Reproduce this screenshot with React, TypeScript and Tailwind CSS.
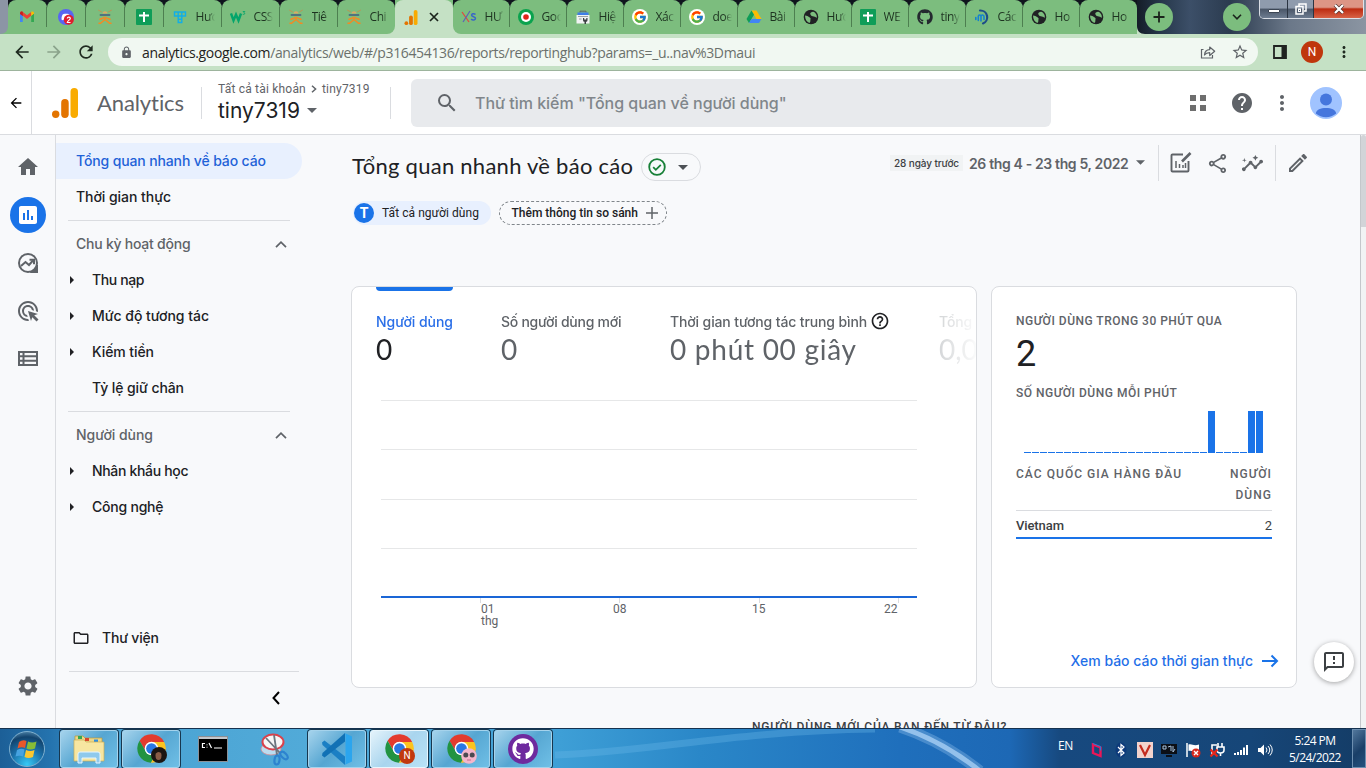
import React from "react";
import {
  MdAdsClick,
  MdArrowBack,
  MdArrowForward,
  MdHelp,
  MdHelpOutline,
  MdHome,
  MdInsertChart,
  MdInsights,
  MdLock,
  MdMoreVert,
  MdOutlineEdit,
  MdOutlineFeedback,
  MdOutlineFolder,
  MdOutlineShare,
  MdRefresh,
  MdSearch,
  MdSettings,
  MdStarOutline,
} from "react-icons/md";
import { FcGoogle } from "react-icons/fc";
import { FaGithub } from "react-icons/fa";

/* ---------- small drawings ---------- */

const GmailIcon = () => (
  <svg viewBox="0 0 16 16" className="size-4">
    <path d="M1 4v9h2.8V7z" fill="#4285f4" />
    <path d="M15 4v9h-2.8V7z" fill="#34a853" />
    <path d="M1 4.2C1 2.8 2.6 2 3.8 3L8 6.200l4.200-3.200v3.800L8 10 3.800 6.800 1 4.700z" fill="#ea4335" />
    <path d="M12.200 3C13.400 2 15 2.800 15 4.200v.6l-2.800 2z" fill="#fbbc04" />
    <path d="M1 4.200v.7l2.800 2V3C2.600 2 1 2.800 1 4.200z" fill="#c5221f" />
  </svg>
);
const DiscordIcon = () => (
  <svg viewBox="0 0 16 16" className="size-4">
    <circle cx="8" cy="8" r="8" fill="#5865f2" />
    <path d="M3.500 10.500c0-3 .8-5 2-5.400 1.600-.5 3.500-.5 5 0 1.300.5 2 2.500 2 5.400-1 1-2 .8-2.400 0H6c-.6.900-1.500 1-2.500 0z" fill="#fff" />
    <circle cx="10.800" cy="10.800" r="5" fill="#e01e2e" />
    <path d="M9.300 9.500c.2-2 3-1.800 3 0 0 1.200-2.800 2.200-3 4h3.200" stroke="#fff" strokeWidth="1.200" fill="none" />
  </svg>
);
const RobotIcon = () => (
  <svg viewBox="0 0 16 16" className="size-4" fill="none" strokeLinecap="round">
    <path d="M1.500 1.200l3 1.600M14.500 1.200l-3 1.600" stroke="#c98a4a" strokeWidth=".8" />
    <path d="M5.500 4.500c0-3 5-3 5 0z" fill="#d9a865" />
    <path d="M3.500 6h9" stroke="#4f7480" strokeWidth="1.800" />
    <path d="M6.500 8.200h3L8 10.500z" fill="#f28a24" stroke="#f28a24" strokeWidth=".8" />
    <path d="M3 10.200l3-1M13 10.200l-3-1M8 10.500l-4.500 3.800H2M8 10.500l4.500 3.800H14" stroke="#f28a24" strokeWidth="1.500" />
  </svg>
);
const SheetsIcon = () => (
  <svg viewBox="0 0 16 16" className="size-4">
    <rect width="16" height="16" rx="1" fill="#0f9d58" />
    <path d="M7 3h2v2.500h4v2H9V13H7V7.500H3v-2h4z" fill="#fff" />
  </svg>
);
const TIcon = () => (
  <svg viewBox="0 0 16 16" className="size-4" fill="none" stroke="#12aee6" strokeWidth="1.400">
    <path d="M2.500 3h11v4h-11zM6.200 3v4M9.800 3v4M6.200 7v6.500h3.600V7M6.200 10.200h3.600" />
  </svg>
);
const W3Icon = () => (
  <svg viewBox="0 0 16 16" className="size-4" fill="none" stroke="#04a56b">
    <path d="M1 4.500l2.500 7 2.500-6 2.500 6 2.500-7" strokeWidth="2.400" />
    <path d="M12.800 2.500h2l-1 1.300c1.500.2 1.300 2-1 1.500" strokeWidth=".9" />
  </svg>
);
const GaIcon = ({ cls }: { cls: string }) => (
  <svg viewBox="0 0 26 30" className={cls}>
    <rect x="18.500" y="0" width="7.500" height="30" rx="3.700" fill="#f9ab00" />
    <rect x="9.200" y="11" width="7.500" height="19" rx="3.700" fill="#e37400" />
    <circle cx="3.700" cy="26.300" r="3.700" fill="#e37400" />
  </svg>
);
const XsIcon = () => (
  <svg viewBox="0 0 16 16" className="size-4" fill="none" strokeWidth="1.200">
    <path d="M1 3l7 10" stroke="#e5433d" />
    <path d="M9 2L2 13" stroke="#5a62b8" />
    <path d="M14.500 5.500c-1.500-1.500-4.300-.8-3.800 1 .4 1.400 3.600 1 3.800 2.700.2 2-2.800 2.300-4.400 1" stroke="#3a67c8" strokeWidth="1.500" />
  </svg>
);
const TargetIcon = () => (
  <svg viewBox="0 0 16 16" className="size-4">
    <circle cx="8" cy="8" r="8" fill="#0aa34e" />
    <circle cx="8" cy="8" r="5" fill="#fff" />
    <circle cx="8" cy="8" r="2.800" fill="#e0241b" />
  </svg>
);
const StoreIcon = () => (
  <svg viewBox="0 0 16 16" className="size-4">
    <path d="M5 3.500V2.200h6v1.300" stroke="#5f6368" fill="none" />
    <rect x="2.500" y="3.500" width="11" height="2.500" fill="#3f7de8" />
    <rect x="1.500" y="6" width="13" height="8.500" fill="#f1f3f4" />
    <path d="M3 7.500h10M4 10h2.500" stroke="#9aa0a6" />
    <path d="M8 9v2c0 1.300.8 1.800 1.500 1.800V15H11v-2.200c.8 0 1.500-.5 1.500-1.800V9h-1.200v1.500H9.200V9z" fill="#3c4043" />
  </svg>
);
const GIcon = () => (
  <span className="flex size-4 items-center justify-center rounded-full bg-white">
    <FcGoogle size={14} />
  </span>
);
const DriveIcon = () => (
  <svg viewBox="0 0 16 16" className="size-4">
    <path d="M5.500 1.500h5L15.500 10h-5z" fill="#fbbc04" />
    <path d="M5.500 1.500L.5 10l2.500 4L8 5.700z" fill="#0f9d58" />
    <path d="M3 14l2.400-4h10L13 14z" fill="#4285f4" />
  </svg>
);
const GlobeIcon = () => (
  <svg viewBox="0 0 16 16" className="size-4">
    <circle cx="8" cy="8" r="7.300" fill="#202124" />
    <path d="M2 6.500c2 0 3 .8 4 1.500s2 1 1.500 2.200C7 11.500 8 12 6.500 14 4 13 2 10.500 2 6.500zM8 3.500c1.500-1 3-.8 4 .2 1.500 1.500 2 3 1.800 5-1 0-1.600-1.200-3-1.200S8 6.800 7.600 5.800 7 4.200 8 3.500z" fill="#7cbd7e" />
  </svg>
);
const MIcon = () => (
  <svg viewBox="0 0 16 16" className="size-4" fill="none" strokeLinecap="round">
    <path d="M6 1.500A6.700 6.700 0 0 1 9 14.400" stroke="#1d4e89" strokeWidth="2.200" />
    <path d="M1.800 10.500V8.500M4.300 11.500V7.500c0-2 2.700-2 2.700 0v4.500M7 7.500c0-2.300 3-1.800 3 .3V10.500" stroke="#1483cf" strokeWidth="1.600" />
  </svg>
);

const Caret = ({ cls }: { cls: string }) => (
  <svg viewBox="0 0 10 5" className={cls}>
    <path d="M0 0h10L5 5z" fill="currentColor" />
  </svg>
);

/* ---------- browser tabs ---------- */

function Tab({ icon, label, edge, wide }: { icon: React.ReactNode; label?: string; edge?: "left" | "right" | "last"; wide?: boolean }) {
  const inner = edge === "left" ? "rounded-bl-lg" : edge === "right" ? "rounded-br-lg" : "";
  return (
    <div
      className={
        (edge === "left" || edge === "right"
          ? "bg-[linear-gradient(to_top,#c5e1c5_60%,#0f141d_60%)] "
          : "bg-[linear-gradient(to_top,#7cbd7e_60%,#0f141d_60%)] ") + (label ? (wide ? "w-[58px]" : "w-[57px]") : "w-[39px]")
      }
    >
      <div className={"flex h-[34px] items-center rounded-t-lg bg-[#7cbd7e] " + inner + (label ? " gap-2 pl-[7.500px]" : " justify-center")}>
        {icon}
        {label && (
          <span className="w-[19px] overflow-hidden whitespace-nowrap text-[12px] tracking-[-0.4px] text-[#1d3320] [mask-image:linear-gradient(to_right,#000_60%,transparent)]">
            {label}
          </span>
        )}
        {!edge || edge === "left" ? <span className={"h-5 w-px bg-[#4d7f50] " + (label ? (wide ? "-ml-[2px]" : "-ml-[3px]") : "translate-x-[11px]")} /> : null}
      </div>
    </div>
  );
}

function TabStrip() {
  return (
    <div className="relative flex h-[34px] bg-[linear-gradient(to_right,#8c95a5_0px,#8c95a5_30px,#0f141d_60px,#0f141d_1130px,#26374a_1160px,#3c4f68_1190px,#2b3b4f_1230px,#6b7889_1290px,#8b95a2_1366px)]">
      <svg viewBox="0 0 8 34" className="h-[34px] w-2">
        <path d="M8 26c0 5-3 8-8 8h8z" fill="#7cbd7e" />
      </svg>
      <Tab icon={<GmailIcon />} />
      <Tab icon={<DiscordIcon />} />
      <Tab icon={<RobotIcon />} />
      <Tab icon={<SheetsIcon />} />
      <Tab icon={<TIcon />} label="Hướ" wide />
      <Tab icon={<W3Icon />} label="CSS" wide />
      <Tab icon={<RobotIcon />} label="Tiê" wide />
      <Tab icon={<RobotIcon />} label="Chi" edge="right" />
      <div className="w-[58px] bg-[#7cbd7e]">
        <div className="flex h-[34px] items-center gap-3 rounded-t-lg bg-[#c5e1c5] pl-2">
          <GaIcon cls="h-[15px] w-4" />
          <svg viewBox="0 0 10 10" className="size-2.5 -ml-0.5" stroke="#1b241c" strokeWidth="1.700">
            <path d="M1 1l8 8M9 1L1 9" />
          </svg>
        </div>
      </div>
      <Tab icon={<XsIcon />} label="HƯ" edge="left" />
      <Tab icon={<TargetIcon />} label="Goo" />
      <Tab icon={<StoreIcon />} label="Hiệ" />
      <Tab icon={<GIcon />} label="Xác" />
      <Tab icon={<GIcon />} label="doe" />
      <Tab icon={<DriveIcon />} label="Bài" />
      <Tab icon={<GlobeIcon />} label="Hướ" />
      <Tab icon={<SheetsIcon />} label="WE" />
      <Tab icon={<FaGithub size={16} color="#24292f" />} label="tiny" />
      <Tab icon={<MIcon />} label="Các" />
      <Tab icon={<GlobeIcon />} label="Ho" />
      <Tab icon={<GlobeIcon />} label="Ho" edge="last" />
      <svg viewBox="0 0 8 34" className="h-[34px] w-2">
        <path d="M0 26c0 5 3 8 8 8H0z" fill="#c5e1c5" />
      </svg>
      <div className="mt-[3px] flex size-7 items-center justify-center rounded-full bg-[#7cbd7e]">
        <svg viewBox="0 0 12 12" className="size-3" stroke="#1b241c" strokeWidth="1.800">
          <path d="M6 .5v11M.5 6h11" />
        </svg>
      </div>
      <div className="mt-[3px] ml-[50px] flex size-7 items-center justify-center rounded-full bg-[#7cbd7e]">
        <svg viewBox="0 0 10 6" className="h-1.5 w-2.5" fill="none" stroke="#1b241c" strokeWidth="1.600">
          <path d="M1 .8l4 4 4-4" />
        </svg>
      </div>
      <div className="ml-2 flex h-[19px] w-[105px] overflow-hidden rounded-b-[5px] border border-t-0 border-[#e8ecf2]/90">
        <div className="flex w-7 items-center justify-center border-r border-[#2b3442] bg-[linear-gradient(#8f9bad_45%,#4a5668_50%,#6d7c90)]">
          <span className="mt-1 h-[4px] w-3 rounded-[1px] border border-[#3c4654] bg-white" />
        </div>
        <div className="flex w-[26px] items-center justify-center border-r border-[#2b3442] bg-[linear-gradient(#8f9bad_45%,#4a5668_50%,#6d7c90)]">
          <svg viewBox="0 0 12 12" className="size-3" fill="none" stroke="#fff" strokeWidth="1.500">
            <path d="M4 3V1h7v7H9" />
            <rect x="1" y="3.500" width="7" height="7.500" />
            <rect x="3.500" y="6" width="2" height="2.500" strokeWidth="1" />
          </svg>
        </div>
        <div className="flex flex-1 items-center justify-center bg-[linear-gradient(#dd9585_40%,#bd2c12_50%,#d86347)]">
          <svg viewBox="0 0 12 10" className="h-2.5 w-3">
            <path d="M2 1l8 8M10 1L2 9" stroke="#51302c" strokeWidth="3.600" />
            <path d="M2 1l8 8M10 1L2 9" stroke="#fff" strokeWidth="2.300" />
          </svg>
        </div>
      </div>
    </div>
  );
}

function Toolbar() {
  return (
    <div className="flex h-[37px] items-center border-b border-[#9db49d] bg-[#c5e1c5] pl-3 text-[#1f2a20]">
      <MdArrowBack size={20} />
      <MdArrowForward size={20} className="ml-3 text-[#8aa38b]" />
      <MdRefresh size={20} className="ml-3" />
      <div className="ml-3 flex h-7 w-[1150px] items-center rounded-full bg-[#f1f8f2] pl-3">
        <MdLock size={13} className="text-[#5f6368]" />
        <span className="ml-[9px] w-[1058px] whitespace-nowrap text-[14px] tracking-[-0.367px] text-[#6b716c]">
          <span className="text-[#1f2320]">analytics.google.com</span>
          /analytics/web/#/p316454136/reports/reportinghub?params=_u..nav%3Dmaui
        </span>
        <svg viewBox="0 0 16 16" className="size-4 shrink-0" fill="none" stroke="#5f6368" strokeWidth="1.200">
          <path d="M3.500 5.500H1.500V14h11v-3" />
          <path d="M4.500 11c.3-3.500 2-5.200 5.200-5.300V3l5 4.200-5 4.300V8.700c-2.500 0-4 .6-5.200 2.300z" strokeLinejoin="round" />
        </svg>
        <MdStarOutline size={18} className="ml-[15px] shrink-0 text-[#5f6368]" />
      </div>
      <svg viewBox="0 0 14 14" className="ml-[15px] size-3.5">
        <path d="M1 1h12v12H1z" fill="none" stroke="#1f2320" strokeWidth="1.800" />
        <path d="M8.500 1H13v12H8.500z" fill="#1f2320" />
      </svg>
      <span className="ml-3.5 flex size-[22px] items-center justify-center rounded-full bg-[#bf360c] font-['Roboto'] text-[12px] text-white">N</span>
      <MdMoreVert size={18} className="ml-3" />
    </div>
  );
}

/* ---------- Analytics ---------- */

function Header() {
  return (
    <header className="flex h-16 border-b border-[#dadce0] bg-white">
      <div className="flex w-8 items-center border-r border-[#dadce0] pl-2">
        <MdArrowBack size={16} className="text-black" />
      </div>
      <div className="flex items-center pl-[21px]">
        <GaIcon cls="-ml-px h-[30px] w-[26px]" />
        <span className="ml-[19px] w-[104px] font-['Lato'] text-[22px] tracking-[-0.1px] text-[#5f6368]">Analytics</span>
        <div className="h-8 w-px bg-[#dadce0]" />
        <div className="w-[172px] pl-4">
          <div className="flex h-4 items-center whitespace-nowrap font-['Roboto'] text-[12px] text-[#5f6368]">
            <span className="tracking-[0.2px]">Tất cả tài khoản</span>
            <svg viewBox="0 0 6 8" className="mx-[5px] h-2 w-1.5" fill="none" stroke="#5f6368" strokeWidth="1.500">
              <path d="M1 .8L4.600 4 1 7.200" />
            </svg>
            <span className="tracking-[0.2px]">tiny7319</span>
          </div>
          <div className="flex h-7 items-center text-[#202124]">
            <span className="font-['Inter'] text-[21px]">tiny7319</span>
            <Caret cls="ml-[7px] h-[5px] w-2.5 text-[#5f6368]" />
          </div>
        </div>
        <div className="ml-4 h-8 w-px bg-[#dadce0]" />
        <div className="ml-5 flex h-12 w-[640px] items-center rounded-md bg-[#e8eaed] pl-6">
          <MdSearch size={24} className="text-[#5f6368]" />
          <span className="ml-4 font-['Inter'] text-[16px] font-medium tracking-[-0.03px] text-[#80868b]">
            Thử tìm kiếm "Tổng quan về người dùng"
          </span>
        </div>
        <div className="ml-[139px] grid grid-cols-2 gap-1">
          <span className="size-1.5 bg-[#6e6e6e]" />
          <span className="size-1.5 bg-[#6e6e6e]" />
          <span className="size-1.5 bg-[#6e6e6e]" />
          <span className="size-1.5 bg-[#6e6e6e]" />
        </div>
        <MdHelp size={24} className="ml-6 text-[#5f6368]" />
        <MdMoreVert size={24} className="ml-4 text-[#5f6368]" />
        <svg viewBox="0 0 32 32" className="ml-4 size-8">
          <circle cx="16" cy="16" r="16" fill="#a0c3ff" />
          <circle cx="16" cy="12.500" r="6" fill="#4576dd" />
          <path d="M5.800 26.500C6.500 22.500 10.500 21 16 21s9.500 1.500 10.200 5.500a16 16 0 0 1-20.400 0z" fill="#4576dd" />
        </svg>
      </div>
    </header>
  );
}

function Rail() {
  return (
    <div className="flex w-14 flex-col items-center border-r border-[#dadce0] pl-px text-[#5f6368]">
      <div className="mt-2 flex h-12 items-center"><MdHome size={24} /></div>
      <div className="flex h-12 items-center">
        <span className="flex size-9 items-center justify-center rounded-full bg-[#1a73e8] text-white">
          <MdInsertChart size={24} />
        </span>
      </div>
      <div className="flex h-12 items-center">
        <svg viewBox="0 0 22 22" className="size-[22px]" fill="none" stroke="currentColor" strokeWidth="2">
          <circle cx="11" cy="11" r="9" />
          <path d="M14 20h6v-7" />
          <path d="M4 14l4.500-4 3.500 3 4-4.500" />
          <path d="M12.500 7.800H17v4.500" />
          <path d="M15 20l5-5v5z" fill="currentColor" />
        </svg>
      </div>
      <div className="flex h-12 items-center"><MdAdsClick size={24} /></div>
      <div className="flex h-12 items-center pb-px">
        <svg viewBox="0 0 20 15" className="h-[15px] w-5" fill="none" stroke="currentColor" strokeWidth="2">
          <path d="M1 1h18v13H1zM5.500 1v13M1 5.300h18M1 9.700h18" />
        </svg>
      </div>
      <div className="mt-auto mb-[30px]"><MdSettings size={24} /></div>
    </div>
  );
}

function Group({ label, track }: { label: string; track: string }) {
  return (
    <div className="flex h-9 items-center justify-between pr-[3px] pl-2 text-[#5f6368]">
      <span className={"-mt-0.5 " + track}>{label}</span>
      <svg viewBox="0 0 12 7" className="h-[7px] w-3" fill="none" stroke="currentColor" strokeWidth="1.700">
        <path d="M1 6.200L6 1.200l5 5" />
      </svg>
    </div>
  );
}
function Item({ label, track, leaf }: { label: string; track: string; leaf?: boolean }) {
  return (
    <div className="flex h-9 items-center">
      <span className="flex w-6 pl-[1.500px]">
        {!leaf && (
          <svg viewBox="0 0 4 8" className="h-2 w-1"><path d="M0 0l4 4-4 4z" fill="#202124" /></svg>
        )}
      </span>
      <span className={"-mt-0.5 " + track}>{label}</span>
    </div>
  );
}

function SideNav() {
  return (
    <nav className="flex w-[295px] flex-col pt-2 font-['Inter'] text-[14px] font-medium whitespace-nowrap text-[#202124]">
      <div className="flex h-9 w-[246px] items-center rounded-r-full bg-[#e8f0fe] pb-0.5 pl-5 tracking-[-0.13px] text-[#1f62d8]">Tổng quan nhanh về báo cáo</div>
      <div className="flex h-9 items-center pb-0.5 pl-5 tracking-[-0.05px]">Thời gian thực</div>
      <div className="ml-3 w-[222px] border-b border-[#dadce0] pt-[5px]" />
      <div className="ml-3 w-[222px] border-b border-[#dadce0] pt-[5px] pb-[5px]">
        <Group label="Chu kỳ hoạt động" track="tracking-[-0.24px]" />
        <Item label="Thu nạp" track="tracking-[-0.38px]" />
        <Item label="Mức độ tương tác" track="tracking-[-0.03px]" />
        <Item label="Kiếm tiền" track="tracking-[-0.08px]" />
        <Item label="Tỷ lệ giữ chân" track="tracking-[-0.09px]" leaf />
      </div>
      <div className="ml-3 w-[222px] pt-[5px]">
        <Group label="Người dùng" track="tracking-[-0.05px]" />
        <Item label="Nhân khẩu học" track="tracking-[-0.33px]" />
        <Item label="Công nghệ" track="tracking-[-0.22px]" />
      </div>
      <div className="mt-auto ml-[13px] w-[230px] border-b border-[#dadce0] pb-[15px]">
        <div className="flex h-9 items-center pl-[3px]">
          <MdOutlineFolder size={18} />
          <span className="-mt-0.5 ml-3 tracking-[-0.2px]">Thư viện</span>
        </div>
      </div>
      <div className="mb-1 flex h-[52px] items-center pl-[216px]">
        <svg viewBox="0 0 8 14" className="h-[14px] w-2" fill="none" stroke="#000" strokeWidth="2">
          <path d="M7 1L1.500 7 7 13" />
        </svg>
      </div>
    </nav>
  );
}

function Metric({ label, value, cls, track, help }: { label: string; value: string; cls: string; track: string; help?: boolean }) {
  return (
    <div className={"shrink-0 whitespace-nowrap " + cls}>
      <div className="flex h-5 items-center font-['Inter'] text-[14px] font-medium">
        <span className={track}>{label}</span>
        {help && <MdHelpOutline size={20} className="ml-[3px] text-[#202124]" />}
      </div>
      <div className="mt-0.5 h-8 font-['Lato'] text-[28px] leading-8">{value}</div>
    </div>
  );
}

const gridLines = [4.5, 53.5, 103.5, 152.5];
const ticks: [number, number, string][] = [[99.5, 100, "01"], [238.5, 232, "08"], [378.5, 371, "15"], [517.5, 503, "22"]];

function OverviewCard() {
  return (
    <section className="flex h-[402px] w-[626px] flex-col overflow-hidden rounded-lg border border-[#dadce0] bg-white">
      <div className="ml-6 h-1 w-[77px] rounded-b bg-[#1a73e8]" />
      <div className="mt-5 flex overflow-hidden pl-6 text-[#5f6368] [mask-image:linear-gradient(to_right,#000_540px,transparent_628px)]">
        <Metric label="Người dùng" value="0" cls="w-[125px] text-[#202124]" track="text-[#2a6fe8] tracking-[-0.05px]" />
        <Metric label="Số người dùng mới" value="0" cls="w-[169px]" track="tracking-[-0.26px]" />
        <Metric label="Thời gian tương tác trung bình" value="0 phút 00 giây" cls="w-[269px] [&>div:last-child]:tracking-[0.73px]" track="tracking-[-0.13px]" help />
        <Metric label="Tổng doanh thu" value="0,00 US$" cls="text-[#a4a8ac]" track="tracking-[-0.1px]" />
      </div>
      <svg viewBox="0 0 560 240" className="mt-[31px] ml-[29px] h-[240px] w-[560px] shrink-0 font-['Roboto'] text-[12px]">
        {gridLines.map((y) => (
          <path key={y} d={`M0 ${y}H536`} stroke="#e6e7e8" />
        ))}
        {ticks.map(([x, tx, label]) => (
          <g key={label}>
            <path d={`M${x} 202v5`} stroke="#dadce0" />
            <text x={tx} y="217" fill="#5f6368">{label}</text>
          </g>
        ))}
        <text x="100" y="229" fill="#5f6368">thg</text>
        <path d="M0 201H536" stroke="#1a66d6" strokeWidth="2" />
      </svg>
    </section>
  );
}

const minutes = Array.from({ length: 30 }, (_, i) => (i === 23 || i === 28 || i === 29 ? 1 : 0));

function RealtimeCard() {
  return (
    <section className="flex h-[402px] w-[306px] flex-col rounded-lg border border-[#dadce0] bg-white px-6 pt-6 font-['Roboto'] text-[12px] text-[#5f6368]">
      <div className="flex h-5 items-center whitespace-nowrap font-medium tracking-[0.49px]">NGƯỜI DÙNG TRONG 30 PHÚT QUA</div>
      <div className="flex h-[46px] items-center text-[36px] leading-none text-[#202124]">2</div>
      <div className="mt-1.5 flex h-5 items-center font-medium tracking-[0.51px]">SỐ NGƯỜI DÙNG MỖI PHÚT</div>
      <svg viewBox="0 0 256 52" className="mt-[3px] h-[52px] w-[256px] shrink-0">
        {minutes.map((v, i) => (
          <rect key={i} x={8 + i * 8} y={v ? 5 : 46} width="7" height={v ? 42 : 1} fill="#1a73e8" />
        ))}
      </svg>
      <div className="mt-1.5 flex justify-between border-b border-[#dadce0] pb-1 leading-[21px] font-medium tracking-[1.04px]">
        <span>CÁC QUỐC GIA HÀNG ĐẦU</span>
        <span className="w-14 text-right">NGƯỜI DÙNG</span>
      </div>
      <div className="flex h-7 items-center justify-between border-b-2 border-[#1a73e8] pt-1 text-[#3c4043]">
        <span className="text-[13px] font-medium tracking-[-0.1px]">Vietnam</span>
        <span className="text-[13px]">2</span>
      </div>
      <div className="mt-auto -mr-[7px] mb-[14px] flex h-6 items-center justify-end font-['Inter'] text-[14px] font-medium text-[#1f6fe8]">
        <span className="-mt-0.5">Xem báo cáo thời gian thực</span>
        <svg viewBox="0 0 18 14" className="ml-2 h-[14px] w-[18px]" fill="none" stroke="#1a73e8" strokeWidth="2">
          <path d="M1 7h15M10.500 1.500L16 7l-5.500 5.500" />
        </svg>
      </div>
    </section>
  );
}

function Main() {
  return (
    <main className="relative flex min-w-0 flex-1 flex-col overflow-hidden">
      <div className="flex h-16 shrink-0 items-center">
        <h1 className="-mt-[3px] w-[290px] pl-px font-['Lato'] text-[22px] tracking-[0.26px] whitespace-nowrap text-[#202124]">Tổng quan nhanh về báo cáo</h1>
        <div className="flex h-7 w-[60px] items-center rounded-full border border-[#dadce0] pl-[6px]">
          <svg viewBox="0 0 18 18" className="size-[18px]" fill="none" stroke="#188038" strokeWidth="1.800">
            <circle cx="9" cy="9" r="7.800" />
            <path d="M5.200 9.200l2.600 2.600 5-5" />
          </svg>
          <Caret cls="ml-3 h-[5px] w-2.5 text-[#4d5156]" />
        </div>
        <div className="mb-2 ml-[189px] flex items-center text-[#5f6368]">
          <span className="flex h-4 w-[73px] items-center justify-center bg-[#f1f3f4] font-['Inter'] text-[10px] font-medium tracking-[-0.1px] text-[#3c4043]">28 ngày trước</span>
          <span className="ml-1.5 w-[161px] whitespace-nowrap font-['Inter'] text-[14px] font-semibold tracking-[-0.36px]">26 thg 4 - 23 thg 5, 2022</span>
          <Caret cls="mb-0.5 ml-1.5 h-[5px] w-[9px]" />
          <span className="ml-[13px] h-9 w-px bg-[#dadce0]" />
          <svg viewBox="0 0 22 22" className="ml-[11px] size-[22px]" fill="none" stroke="currentColor" strokeWidth="1.900">
            <path d="M13 2.500H2.500a1 1 0 0 0-1 1v15a1 1 0 0 0 1 1h15a1 1 0 0 0 1-1V9" />
            <path d="M6 9v7M9.500 12v4M13 13v3M15.500 11v5" strokeWidth="1.500" />
            <path d="M12 9.500L20.500 1" strokeWidth="2.600" />
          </svg>
          <MdOutlineShare size={23} className="ml-3.5" />
          <MdInsights size={23} className="ml-3" />
          <span className="ml-[11px] h-9 w-px bg-[#dadce0]" />
          <MdOutlineEdit size={24} className="ml-2.5" />
        </div>
      </div>
      <div className="mt-0.5 flex h-6 shrink-0 gap-2 pl-0.5 font-['Roboto'] text-[12px] text-[#202124]">
        <div className="flex w-[138px] items-center rounded-full bg-[#e8f0fe] pl-px">
          <span className="flex size-5 items-center justify-center rounded-full bg-[#1a73e8] text-[14px] font-bold text-white">T</span>
          <span className="ml-2 tracking-[0.06px]">Tất cả người dùng</span>
        </div>
        <div className="flex w-[168px] items-center rounded-full border border-dashed border-[#80868b] pl-[11.500px] font-medium">
          <span className="whitespace-nowrap">Thêm thông tin so sánh</span>
          <svg viewBox="0 0 12 12" className="ml-2 size-3" stroke="#5f6368" strokeWidth="1.500"><path d="M6 0v12M0 6h12" /></svg>
        </div>
      </div>
      <div className="mt-[61px] flex shrink-0 gap-3.5">
        <OverviewCard />
        <RealtimeCard />
      </div>
      <div className="mt-[30px] shrink-0 pl-[401px] font-['Roboto'] text-[12px] leading-[18px] font-medium tracking-[0.79px] whitespace-nowrap text-[#3c4043]">NGƯỜI DÙNG MỚI CỦA BẠN ĐẾN TỪ ĐÂU?</div>
      <div className="absolute top-[507px] right-[6px] flex size-10 items-center justify-center rounded-full bg-white shadow-[0_1px_5px_rgba(0,0,0,0.35)]">
        <MdOutlineFeedback size={24} className="text-[#3c4043]" />
      </div>
    </main>
  );
}

/* ---------- taskbar ---------- */

const ChromeIcon = () => (
  <svg viewBox="0 0 48 48" className="size-[31px]">
    <path d="M43.600 14A22 22 0 0 0 5.540 12.030L15.340 29A10 10 0 0 1 24 14z" fill="#e33b2e" />
    <path d="M43.600 14A22 22 0 0 1 22.860 45.970L32.660 29A10 10 0 0 0 24 14z" fill="#fcc31e" />
    <path d="M5.540 12.030A22 22 0 0 0 22.860 45.970L32.660 29A10 10 0 0 1 15.340 29z" fill="#229342" />
    <circle cx="24" cy="24" r="10.500" fill="#fff" />
    <circle cx="24" cy="24" r="8.300" fill="#2a78e4" />
  </svg>
);
const FolderIcon = () => (
  <svg viewBox="0 0 34 30" className="h-[30px] w-[34px]">
    <path d="M3 2h8l2 2h17v22H3z" fill="#ecd688" stroke="#b89a3e" strokeWidth=".7" />
    <path d="M6 2h4v3H6z" fill="#35a853" /><path d="M13 4h4v3h-4z" fill="#d9482b" /><path d="M22 5.500h4v3h-4z" fill="#2f8fe0" />
    <path d="M2 6h10l2 2h18v19H2z" fill="#f7e6a1" stroke="#c9ac55" strokeWidth=".7" />
    <path d="M6 29v-9q0-2 2-2h18q2 0 2 2v9h-4v-5H10v5z" fill="#8fc9ec" stroke="#e5f5ff" />
  </svg>
);
const CmdIcon = () => (
  <svg viewBox="0 0 30 26" className="h-[26px] w-[30px]">
    <rect x=".5" y=".5" width="29" height="25" fill="#000" stroke="#8c9096" />
    <rect x="1" y="1" width="28" height="2" fill="#c3c7cc" />
    <path d="M7 7.500H4.500v4H7M9 8.500v.8M9 10.700v.8M11 7l2.500 5M16 12h8" stroke="#fff" strokeWidth="1.200" fill="none" />
  </svg>
);
const SnipIcon = () => (
  <svg viewBox="0 0 30 34" className="h-[34px] w-[30px]" fill="none">
    <ellipse cx="11" cy="17" rx="10" ry="6" fill="#bcdcef" stroke="#d98a92" strokeWidth=".8" />
    <ellipse cx="13" cy="10" rx="10.500" ry="7.500" fill="#f6f6f6" stroke="#d9424c" strokeWidth="2" />
    <path d="M6 6l14 15M14 3l3 20" stroke="#6c757e" strokeWidth="1.800" />
    <ellipse cx="17" cy="28" rx="2.500" ry="4.500" transform="rotate(8 17 28)" stroke="#2d83cf" strokeWidth="2.200" />
    <ellipse cx="24" cy="23.500" rx="2.500" ry="4.500" transform="rotate(-45 24 23.500)" stroke="#2d83cf" strokeWidth="2.200" />
  </svg>
);
const VsCodeIcon = () => (
  <svg viewBox="0 0 32 34" className="h-[34px] w-8">
    <path d="M1 10.500L3.500 8.500 24 24.500V33L1.500 13z" fill="#1b7fc4" />
    <path d="M1 23.500l2.500 2L24 9.500V1L1.500 21z" fill="#1171b5" />
    <path d="M23.500 1L31 4.500v25L23.500 33q1-.5 1-2V3q0-1.500-1-2z" fill="#2ba5ee" />
  </svg>
);

function TaskButton({ children, state }: { children: React.ReactNode; state?: "open" | "active" }) {
  const look =
    state === "active"
      ? "border border-[#e8f6fd] bg-[linear-gradient(135deg,#e4f3fb,#a9d5ee_50%,#b9e2f7)] shadow-[0_0_0_1px_#17374f]"
      : state === "open"
        ? "border border-[#a5d3ec] bg-[linear-gradient(135deg,#a5d3ec,#56a6d2_50%,#6fbfe6)] shadow-[0_0_0_1px_#17374f]"
        : "";
  return <div className={"relative mr-1 flex h-[38px] w-[58px] items-center justify-center rounded-[3px] " + look}>{children}</div>;
}

function Taskbar() {
  return (
    <footer className="relative flex h-10 items-center overflow-hidden border-t border-[#16324f] bg-[linear-gradient(to_right,#1c5f97_0px,#2473ae_50px,#4aa3d3_120px,#52abd9_330px,#3e9fd6_560px,#2a87c8_700px,#1f6fbc_900px,#1d68b5_1010px,#17497f_1060px,#164678_1250px,#143c66_1366px)] font-['Open_Sans']">
      <svg viewBox="0 0 460 40" className="absolute top-0 left-[555px] h-10 w-[460px]" fill="none">
        <path d="M0 26C100 22 180 2 320 0" stroke="#6bb8e8" strokeOpacity=".35" strokeWidth="7" />
        <path d="M345-2C375 8 400 22 425 42" stroke="#a8d0f5" strokeOpacity=".3" strokeWidth="11" />
        <path d="M345-2C375 8 400 22 425 42" stroke="#b5d9fa" strokeOpacity=".7" strokeWidth="5" />
      </svg>
      <div className="relative ml-[9px] mr-[15px] flex size-9 items-center justify-center rounded-full border border-[#7fb0cf] bg-[radial-gradient(circle_at_50%_95%,#37c9f5,#1a6fa8_45%,#12436d_75%,#6fa7c9)]">
        <svg viewBox="-1 0 24 22" className="h-[22px] w-6">
          <path d="M3 4q4-3 7.500-1L9 10Q5.500 8.500 1.500 10.500z" fill="#e8572a" />
          <path d="M12 3.500q4 2 8.500 0L19 10.500q-4.500 2-8.500 0z" fill="#86bc37" />
          <path d="M1 12q4-2 7.500-.5L7 18.500Q3.500 17-.5 18.500z" fill="#47a3e0" />
          <path d="M10 12q4 2 8.500 0L17 19q-4.500 2-8.500 0z" fill="#fbc72e" />
        </svg>
      </div>
      <TaskButton state="open"><FolderIcon /></TaskButton>
      <TaskButton state="open">
        <ChromeIcon />
        <svg viewBox="0 0 16 16" className="absolute right-3 bottom-1 size-4">
          <circle cx="8" cy="8" r="8" fill="#1d1612" /><ellipse cx="7.500" cy="8.500" rx="3" ry="4.500" fill="#8a5c46" />
          <path d="M4 6q3-4 8 0" stroke="#1d1612" strokeWidth="2" fill="none" />
        </svg>
      </TaskButton>
      <TaskButton><CmdIcon /></TaskButton>
      <TaskButton><SnipIcon /></TaskButton>
      <TaskButton state="open"><VsCodeIcon /></TaskButton>
      <TaskButton state="active">
        <ChromeIcon />
        <span className="absolute right-3 bottom-[3px] flex size-4 items-center justify-center rounded-full bg-[#c1380f] font-['Roboto'] text-[10px] text-white">N</span>
      </TaskButton>
      <TaskButton state="open">
        <ChromeIcon />
        <svg viewBox="0 0 16 16" className="absolute right-3 bottom-[3px] size-4">
          <circle cx="8" cy="8" r="7.800" fill="#f4b6cb" />
          <circle cx="4.800" cy="7" r="2.500" fill="#4b4a50" /><circle cx="11.200" cy="7" r="2.500" fill="#4b4a50" />
          <path d="M6 12h4" stroke="#c76b8b" />
        </svg>
      </TaskButton>
      <TaskButton state="open">
        <span className="flex size-[30px] items-center justify-center rounded-full bg-[#6e2a9e]"><FaGithub size={22} color="#fff" /></span>
      </TaskButton>

      <div className="relative ml-auto flex h-full items-center text-white">
        <span className="mb-1.5 w-[31px] font-['Open_Sans'] text-[12px] tracking-[-0.3px]">EN</span>
        <div className="mt-0.5 flex gap-2">
          <svg viewBox="0 0 16 16" className="size-4" fill="none" strokeWidth="2.400"><path d="M4 2.500l7.500 3v8.500L4 11z" stroke="#ec1657" /><path d="M4 1.500l7.500 3v4" stroke="#2b7fd0" strokeWidth="1" /></svg>
          <svg viewBox="0 0 16 16" className="size-4" fill="none"><ellipse cx="8" cy="8" rx="5.500" ry="7.500" fill="#0d3a7a" /><path d="M5 5l6 6-3 2.500v-11L11 5l-6 6" stroke="#fff" strokeWidth="1.200" /></svg>
          <svg viewBox="0 0 16 16" className="size-4" fill="none"><rect width="16" height="16" fill="#f3d3cd" /><path d="M3 3l5 10 5-10" stroke="#c42b1e" strokeWidth="2.200" /></svg>
          <svg viewBox="0 0 16 16" className="size-4" fill="none"><rect y="2" width="16" height="10" fill="#0b0f16" /><path d="M2 4h3v3H2zM7 5l3-1v5M12 4v6l2-3" stroke="#a9c3dc" /><path d="M5 14h6" stroke="#0b0f16" strokeWidth="2" /></svg>
          <svg viewBox="0 0 16 16" className="size-4" fill="none"><path d="M2 1v14" stroke="#fff" strokeWidth="1.500" /><path d="M3.500 2.500c4-1 5 2 10.500 0V9c-5 2-6.500-1-10.500 0z" fill="#fff" /><circle cx="11" cy="11" r="4.500" fill="#d8281d" /><path d="M9 9l4 4M13 9l-4 4" stroke="#fff" strokeWidth="1.400" /></svg>
          <svg viewBox="0 0 16 16" className="size-4" fill="none"><path d="M3 13V3h5M9 1v4M13 1v4M8 5h7v3c0 2-1 3-3.500 3S8 10 8 8zM11.500 11v3" stroke="#fff" strokeWidth="1.600" /><path d="M1.500 7.500l7 7M8.500 7.500l-7 7" stroke="#e8261a" strokeWidth="2.300" /></svg>
          <svg viewBox="0 0 16 16" className="size-4" fill="#fff"><path d="M1 11h2v2H1zM4 10h2v3H4zM7 8h2v5H7zM10 5.500h2V13h-2zM13 3h2v10h-2z" /></svg>
          <svg viewBox="0 0 16 16" className="size-4" fill="none"><path d="M1 6h2.500L7 2.500v11L3.500 10H1z" fill="#fff" /><path d="M9 5.500q2 2.500 0 5M11 4q3.500 4 0 8M13 2.500q4.500 5.500 0 11" stroke="#fff" /></svg>
        </div>
        <div className="ml-3 w-[60px] text-center text-[12px] leading-[17px] tracking-[-0.55px]">
          <div>5:24 PM</div>
          <div>5/24/2022</div>
        </div>
        <div className="ml-[7px] h-full w-3.5 border border-[#6d8fb0] bg-[linear-gradient(135deg,#52779c,#1a3f68_55%,#25517e)]" />
      </div>
    </footer>
  );
}

export default function App() {
  return (
    <div className="flex h-[768px] w-[1366px] flex-col overflow-hidden bg-[#f8f9fb] font-['Open_Sans',sans-serif]">
      <TabStrip />
      <Toolbar />
      <Header />
      <div className="flex min-h-0 flex-1">
        <Rail />
        <SideNav />
        <Main />
        <div className="w-1.5 border-l border-[#c4c7cb] bg-[#f1f3f4]">
          <div className="h-[92px] rounded-t bg-[#d2d4d8]" />
        </div>
      </div>
      <Taskbar />
    </div>
  );
}
